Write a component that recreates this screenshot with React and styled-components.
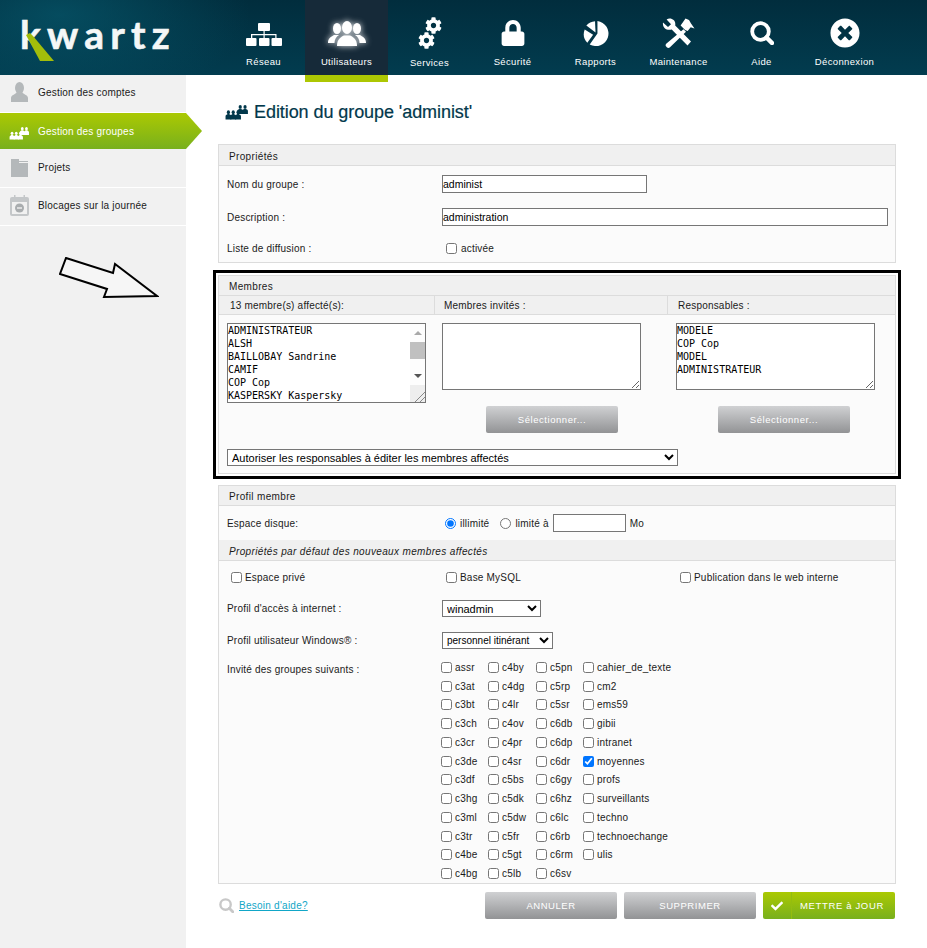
import React from "react";
import styled, { createGlobalStyle } from "styled-components";
import { FaCog, FaLock, FaTimesCircle, FaCheck } from "react-icons/fa";

const GlobalStyle = createGlobalStyle`
  html, body {
    margin: 0;
    padding: 0;
    background: #fff;
    font-family: "Liberation Sans", Arial, sans-serif;
  }
  * { box-sizing: border-box; }
`;

const Page = styled.div`
  width: 927px;
  height: 948px;
  overflow: hidden;
  display: flex;
  flex-direction: column;
`;

const Header = styled.header`
  height: 75px;
  flex: none;
  display: flex;
  background:
    radial-gradient(ellipse 190px 90px at 60px 15px, rgba(6, 85, 105, 0.75), rgba(6, 85, 105, 0) 100%),
    linear-gradient(to bottom, #012d3d, #023c4f);
`;

const LogoBox = styled.div`
  position: relative;
  width: 222px;
  flex: none;
  padding: 11px 0 0 20px;
`;

const LogoText = styled.div`
  color: #f4f7f7;
  font-family: Lato, sans-serif;
  font-weight: 700;
  font-size: 39px;
  line-height: 46px;
  letter-spacing: 6.2px;
  -webkit-text-stroke: 0.6px #f4f7f7;
`;

const LogoLeg = styled.svg`
  position: absolute;
  left: 26px;
  top: 30px;
`;

const Nav = styled.nav`
  display: flex;
  align-items: flex-start;
`;

const NavItem = styled.a`
  position: relative;
  width: 83px;
  height: ${(p) => (p.$active ? "82px" : "75px")};
  display: flex;
  flex-direction: column;
  align-items: center;
  color: #fff;
  font-size: 9.5px;
  letter-spacing: 0.35px;
  background: ${(p) => (p.$active ? "#162a39" : "transparent")};
  border-bottom: ${(p) => (p.$active ? "7px solid #adc703" : "none")};
  white-space: nowrap;
  z-index: 2;
`;

const NavIcon = styled.div`
  height: 56px;
  display: flex;
  align-items: center;
  justify-content: center;
  padding-top: 10px;
  filter: ${(p) => (p.$active ? "drop-shadow(0 0 3px rgba(255,255,255,.9))" : "none")};
`;

const NavLabel = styled.span`
  line-height: 12px;
  margin-top: ${(p) => (p.$low ? "1px" : "0")};
`;

const GearStack = styled.div`
  width: 24px;
  display: flex;
  flex-direction: column;
  svg:first-child { align-self: flex-end; }
  svg:last-child { align-self: flex-start; margin-top: -2px; }
`;

const Body = styled.div`
  flex: 1;
  display: flex;
  min-height: 0;
`;

const Sidebar = styled.aside`
  width: 186px;
  flex: none;
  background: #f1f1f1;
`;

const SideItem = styled.a`
  height: ${(p) => p.$h}px;
  width: ${(p) => (p.$active ? "202px" : "100%")};
  display: flex;
  align-items: center;
  padding-bottom: ${(p) => (p.$active ? "0" : "2px")};
  font-size: 10px;
  letter-spacing: 0.2px;
  color: ${(p) => (p.$active ? "#fff" : "#1a1a1a")};
  background: ${(p) => (p.$active ? "linear-gradient(to bottom, #abc902, #78b01d)" : "transparent")};
  clip-path: ${(p) => (p.$active ? "polygon(0 0, 186px 0, 100% 50%, 186px 100%, 0 100%)" : "none")};
  position: relative;
  z-index: 1;
  margin-bottom: ${(p) => (p.$active ? "1px" : "0")};
  border-bottom: ${(p) => (p.$active ? "none" : "1px solid #fff")};
`;

const SideIcon = styled.span`
  width: 38px;
  flex: none;
  display: flex;
  justify-content: center;
  margin-top: ${(p) => p.$nudge || 0}px;
  color: ${(p) => (p.$active ? "#fff" : "#b4b8ba")};
`;

const ArrowSvg = styled.svg`
  display: block;
  margin: 31px 0 0 59px;
`;

const Main = styled.main`
  flex: 1;
  padding: 0 32px 0 32px;
`;

const Title = styled.h1`
  height: 69px;
  margin: 0;
  padding: 25px 0 0 7px;
  display: flex;
  align-items: flex-start;
  gap: 5px;
  font-size: 18px;
  line-height: 24px;
  letter-spacing: -0.07px;
  font-weight: 400;
  color: #02384b;
  -webkit-text-stroke: 0.2px #02384b;
  svg { margin-top: 5px; }
`;

const Panel = styled.section`
  width: 678px;
  background: #fbfbfb;
  border: 1px solid #dcdcdc;
  font-size: 10px;
  letter-spacing: 0.2px;
  color: #1a1a1a;
  height: ${(p) => p.$h}px;
`;

const PanelHead = styled.div`
  height: ${(p) => p.$h || 21}px;
  padding: 2px 0 0 10px;
  display: flex;
  align-items: center;
  background: #f0f0f0;
  border-bottom: 1px solid #dcdcdc;
  font-size: 10px;
  letter-spacing: 0.35px;
  font-style: ${(p) => (p.$italic ? "italic" : "normal")};
`;

const Row = styled.div`
  height: ${(p) => p.$h}px;
  display: grid;
  grid-template-columns: 215px 1fr;
  padding-left: 8px;
  align-items: center;
`;

const Field = styled.div`
  display: flex;
  align-items: center;
`;

const TextInput = styled.input`
  width: ${(p) => p.$w}px;
  height: 18px;
  margin: ${(p) => p.$margin || 0};
  border: 1px solid #767676;
  border-radius: 0;
  background: #fff;
  padding: 0;
  font-family: "Liberation Sans", Arial, sans-serif;
  font-size: 10.5px;
  color: #000;
  outline: none;
  display: block;
`;

const Check = styled.input.attrs({ type: "checkbox" })`
  width: 11px;
  height: 11px;
  margin: 0 ${(p) => p.$gap || 3}px 0 ${(p) => p.$left || 0}px;
  flex: none;
`;

const Radio = styled.input.attrs({ type: "radio" })`
  width: 11px;
  height: 11px;
  margin: 0 4px 0 ${(p) => p.$left || 0}px;
  flex: none;
`;

const Frame = styled.div`
  width: 688px;
  margin: 7px 0 6px -5px;
  border: 3px solid #000;
  padding: 2px;
`;

const ColHeads = styled.div`
  height: 19px;
  display: grid;
  grid-template-columns: 215px 233px 1fr;
  background: #f0f0f0;
  border-bottom: 1px solid #dcdcdc;
`;

const ColHead = styled.div`
  display: flex;
  align-items: center;
  padding-left: ${(p) => p.$pad}px;
  border-left: ${(p) => (p.$first ? "none" : "1px solid #dcdcdc")};
`;

const MemberCols = styled.div`
  display: grid;
  grid-template-columns: 215px 233px 1fr;
  padding-top: 8px;
  height: 134px;
`;

const MemberCol = styled.div`
  padding-left: ${(p) => p.$pad}px;
`;

const ListWrap = styled.div`
  position: relative;
  width: 199px;
`;

const ListArea = styled.textarea`
  display: block;
  width: 199px;
  height: ${(p) => p.$h}px;
  margin: 0;
  padding: 0;
  border: 1px solid #767676;
  border-radius: 0;
  background: #fff;
  font-family: "DejaVu Sans Mono", "Liberation Mono", monospace;
  font-size: 10px;
  line-height: 13px;
  letter-spacing: 0;
  color: #000;
  outline: none;
  white-space: pre;
`;

// the browser is run with hidden scrollbars, so the list's bar is drawn over it
const ScrollBar = styled.div`
  position: absolute;
  top: 1px;
  right: 1px;
  bottom: 1px;
  width: 15px;
  display: flex;
  flex-direction: column;
  background: #fdfdfd;
`;

const ScrollArrow = styled.div`
  height: 18px;
  flex: none;
  display: flex;
  align-items: center;
  justify-content: center;
  &::before {
    content: "";
    border-left: 4px solid transparent;
    border-right: 4px solid transparent;
    border-${(p) => (p.$up ? "bottom" : "top")}: 4px solid ${(p) => (p.$up ? "#a8a8a8" : "#555")};
  }
`;

const ScrollTrack = styled.div`
  flex: 1;
`;

const ScrollThumb = styled.div`
  height: 17px;
  background: #c0c0c0;
`;

const ScrollCorner = styled.div`
  height: 17px;
  flex: none;
  background:
    linear-gradient(135deg, transparent 66%, #888 66%, #888 69%, transparent 69%, transparent 82%, #888 82%, #888 85%, transparent 85%),
    #eee;
`;

const Button = styled.button`
  display: flex;
  align-items: center;
  justify-content: center;
  width: 132px;
  height: 27px;
  border: none;
  border-radius: 2px;
  padding: 0;
  background: linear-gradient(to bottom, #d0d1d3, #929395);
  color: #fff;
  font-family: "Liberation Sans", Arial, sans-serif;
  font-size: 9.5px;
  letter-spacing: 0.55px;
`;

const SelectButton = styled(Button)`
  margin: 16px 0 0 ${(p) => p.$left}px;
`;

const SaveButton = styled(Button)`
  background: linear-gradient(to bottom, #abc902, #78b01d);
  justify-content: flex-start;
  letter-spacing: 0.65px;
`;

const SaveIcon = styled.span`
  width: 29px;
  align-self: stretch;
  display: flex;
  align-items: center;
  justify-content: center;
  border-right: 1px solid #94bd10;
  margin-right: 8px;
`;

const NativeSelect = styled.select`
  display: block;
  width: ${(p) => p.$w}px;
  height: 17px;
  border: 1px solid #767676;
  border-radius: 0;
  background-color: #fff;
  padding: 0;
  font-family: "Liberation Sans", Arial, sans-serif;
  font-size: ${(p) => p.$size || 11}px;
  color: #000;
  outline: none;
`;

const PolicyRow = styled.div`
  padding-left: 8px;
`;

const OptionsRow = styled.div`
  height: 32px;
  display: grid;
  grid-template-columns: 215px 234px 1fr;
  align-items: center;
  padding-left: 12px;
`;

const InviteRow = styled.div`
  display: grid;
  grid-template-columns: 214px 1fr;
  padding: 2px 0 0 8px;
`;

const InviteLabel = styled.div`
  line-height: 13px;
  padding-top: 5px;
`;

const GroupGrid = styled.div`
  display: grid;
  grid-template-columns: 47px 48px 47px 1fr;
  grid-auto-flow: column;
  grid-template-rows: repeat(12, 18.75px);
`;

const GroupItem = styled.label`
  display: flex;
  align-items: center;
  white-space: nowrap;
`;

const Footer = styled.div`
  width: 677px;
  margin-top: 8px;
  display: flex;
  align-items: center;
  gap: 7px;
`;

const HelpLink = styled.a`
  display: flex;
  align-items: center;
  gap: 5px;
  margin-right: auto;
  padding-left: 1px;
  font-size: 10px;
  letter-spacing: 0.25px;
  color: #11a6c7;
  text-decoration: underline;
  svg { color: #c8c8c8; }
`;

const SitemapIcon = () => (
  <svg width="36" height="27" viewBox="0 -3 36 27" fill="#fff">
    <rect x="12" y="0" width="12" height="8" rx="1" />
    <rect x="0" y="15" width="10.5" height="8" rx="1" />
    <rect x="13" y="15" width="10.5" height="8" rx="1" />
    <rect x="25.5" y="15" width="10.5" height="8" rx="1" />
    <path d="M17.5 8h1.2v3h11.8v4h-1.2v-2.800H18.700V15h-1.200v-2.800H6.300V15H5v-4h12.500z" />
  </svg>
);

const UsersIcon = () => (
  <svg width="38" height="28" viewBox="0 -3 38 28" fill="#fff">
    <ellipse cx="9" cy="6.5" rx="4" ry="5.5" />
    <path d="M0 21c0-5 3-6 6-8h5c-3 2-4.500 4.500-4.500 8z" />
    <ellipse cx="29" cy="6.5" rx="4" ry="5.5" />
    <path d="M38 21c0-5-3-6-6-8h-5c3 2 4.500 4.500 4.500 8z" />
    <ellipse cx="19" cy="5.5" rx="5" ry="6.5" />
    <path d="M9 24c0-7 4-9 7-10.500h6c3 1.500 7 3.500 7 10.500z" />
  </svg>
);

const PieIcon = () => (
  <svg width="28" height="27" viewBox="0 0 29 27" fill="#fff">
    <path d="M16 .6A13 13 0 1 1 8 24.800L16 13.500z" />
    <path d="M4.500 5.200A13 13 0 0 1 13.500.8L14 12.500z" />
    <path d="M2.800 9.300 11.500 14.800 5.500 23A13 13 0 0 1 2.800 9.300z" />
  </svg>
);

const ToolsIcon = () => (
  <svg width="33" height="30" viewBox="0 0 33 30" fill="#fff">
    <path d="M1 4.500 6 9l3-2.800L4.600 1.400C9-1 14.200 2.300 13.200 7.400L29 23.500l-3.500 4L9.700 11.500C4.600 13 .2 9.500 1 4.500z" />
    <path d="M21.500 11.200 24 13.800 8 29.300c-1 .9-2.200.9-3.200 0l-.6-.7c-.8-.9-.8-2 0-2.900z" />
    <path d="M18.600 7.500 23.500.5l3.500 1.500 2 3.500 3.500 5-3.800-1.300-3 3.800-2.600-1z" />
  </svg>
);

const LensIcon = ({ size }) => (
  <svg width={size} height={size} viewBox="0 0 24 24" fill="none" stroke="currentColor">
    <circle cx="10.5" cy="10.5" r="8.3" strokeWidth="3.8" />
    <path d="M16.500 16.500 22 22" strokeWidth="4.5" strokeLinecap="round" />
  </svg>
);

const BustIcon = () => (
  <svg width="17" height="20" viewBox="0 0 17 20" fill="currentColor">
    <ellipse cx="8.5" cy="6" rx="4.5" ry="6" />
    <path d="M0 20v-4c0-3 5-4 6.500-6h4c1.500 2 6.500 3 6.500 6v4z" />
  </svg>
);

// small crowd: two heads behind, three in front
const CrowdIcon = ({ width, height }) => (
  <svg width={width} height={height} viewBox="0 0 22 14" fill="currentColor">
    {[
      [14, 0],
      [18.5, 0],
      [3, 5],
      [7.5, 5],
      [12, 5],
    ].map(([x, y]) => (
      <g key={`${x}-${y}`} transform={`translate(${x} ${y})`}>
        <ellipse cx="0" cy="1.8" rx="1.5" ry="1.8" />
        <path d="M-2.700 8.500V5.500C-2.700 4.300-1 4-.8 3.500H.8C1 4 2.700 4.300 2.700 5.500v3z" />
      </g>
    ))}
  </svg>
);

const FolderIcon = () => (
  <svg width="17" height="18" viewBox="0 0 17 18" fill="currentColor">
    <path d="M0 0h8v2h9v16H0z" />
    <path d="M8 3.500h9" stroke="#f1f1f1" strokeWidth="1" />
  </svg>
);

const CalendarIcon = () => (
  <svg width="19" height="21" viewBox="0 0 19 21" fill="currentColor">
    <rect x="0" y="2" width="19" height="19" rx="2" fill="#c4c7c9" />
    <rect x="2" y="7" width="15" height="12" fill="#f1f1f1" />
    <path d="M4 0h1.500v4H4zM13.500 0H15v4h-1.500z" fill="#c4c7c9" />
    <circle cx="9.5" cy="13" r="4.5" fill="#a9adaf" />
    <path d="M7 12.300h5v1.400H7z" fill="#f1f1f1" />
  </svg>
);

const menu = [
  { label: "Réseau", icon: <SitemapIcon /> },
  { label: "Utilisateurs", icon: <UsersIcon />, active: true },
  {
    label: "Services",
    low: true,
    icon: (
      <GearStack>
        <FaCog size={17} />
        <FaCog size={17} />
      </GearStack>
    ),
  },
  { label: "Sécurité", icon: <FaLock size={26} /> },
  { label: "Rapports", icon: <PieIcon /> },
  { label: "Maintenance", icon: <ToolsIcon /> },
  { label: "Aide", icon: <LensIcon size={24} /> },
  { label: "Déconnexion", icon: <FaTimesCircle size={30} /> },
];

const sideItems = [
  { label: "Gestion des comptes", h: 38, nudge: -2, icon: <BustIcon /> },
  { label: "Gestion des groupes", h: 36, active: true, nudge: 4, icon: <CrowdIcon width={21} height={13} /> },
  { label: "Projets", h: 38, icon: <FolderIcon /> },
  { label: "Blocages sur la journée", h: 38, icon: <CalendarIcon /> },
];

const groups = [
  "assr", "c3at", "c3bt", "c3ch", "c3cr", "c3de", "c3df", "c3hg", "c3ml", "c3tr", "c4be", "c4bg",
  "c4by", "c4dg", "c4lr", "c4ov", "c4pr", "c4sr", "c5bs", "c5dk", "c5dw", "c5fr", "c5gt", "c5lb",
  "c5pn", "c5rp", "c5sr", "c6db", "c6dp", "c6dr", "c6gy", "c6hz", "c6lc", "c6rb", "c6rm", "c6sv",
  "cahier_de_texte", "cm2", "ems59", "gibii", "intranet", "moyennes", "profs", "surveillants",
  "techno", "technoechange", "ulis",
];

const members = [
  "ADMINISTRATEUR", "ALSH", "BAILLOBAY Sandrine", "CAMIF", "COP Cop", "KASPERSKY Kaspersky",
].join("\n");

const managers = ["MODELE", "COP Cop", "MODEL", "ADMINISTRATEUR"].join("\n");

export default function App() {
  return (
    <Page>
      <GlobalStyle />
      <Header>
        <LogoBox>
          <LogoText>kwartz</LogoText>
          <LogoLeg width="30" height="32" viewBox="0 0 30 32">
            <path d="M0 5 4 3 7 6 28 31H14z" fill="#a3bd0a" />
          </LogoLeg>
        </LogoBox>
        <Nav>
          {menu.map((item) => (
            <NavItem key={item.label} $active={item.active}>
              <NavIcon $active={item.active}>{item.icon}</NavIcon>
              <NavLabel $low={item.low}>{item.label}</NavLabel>
            </NavItem>
          ))}
        </Nav>
      </Header>
      <Body>
        <Sidebar>
          {sideItems.map((item) => (
            <SideItem key={item.label} $h={item.h} $active={item.active}>
              <SideIcon $active={item.active} $nudge={item.nudge}>{item.icon}</SideIcon>
              {item.label}
            </SideItem>
          ))}
          <ArrowSvg width="100" height="42" viewBox="0 0 100 42">
            <path
              d="M7 1 54 16 56 7 98 39 45 40 48 32 1 17z"
              fill="#f6f6f6"
              stroke="#000"
              strokeWidth="2"
            />
          </ArrowSvg>
        </Sidebar>
        <Main>
          <Title>
            <CrowdIcon width={24} height={15} />
            Edition du groupe 'administ'
          </Title>

          <Panel $h={119}>
            <PanelHead>Propriétés</PanelHead>
            <Row $h={36}>
              <span>Nom du groupe :</span>
              <TextInput $w={205} defaultValue="administ" />
            </Row>
            <Row $h={30}>
              <span>Description :</span>
              <TextInput $w={446} defaultValue="administration" />
            </Row>
            <Row $h={32}>
              <span>Liste de diffusion :</span>
              <Field>
                <Check $left={4} $gap={4} />
                activée
              </Field>
            </Row>
          </Panel>

          <Frame>
            <Panel $h={199}>
              <PanelHead $h={20}>Membres</PanelHead>
              <ColHeads>
                <ColHead $first $pad={11}>13 membre(s) affecté(s):</ColHead>
                <ColHead $pad={9}>Membres invités :</ColHead>
                <ColHead $pad={10}>Responsables :</ColHead>
              </ColHeads>
              <MemberCols>
                <MemberCol $pad={8}>
                  <ListWrap>
                    <ListArea $h={80} readOnly defaultValue={members} />
                    <ScrollBar>
                      <ScrollArrow $up />
                      <ScrollThumb />
                      <ScrollTrack />
                      <ScrollArrow />
                      <ScrollCorner />
                    </ScrollBar>
                  </ListWrap>
                </MemberCol>
                <MemberCol $pad={8}>
                  <ListArea $h={67} readOnly defaultValue="" />
                  <SelectButton $left={44}>Sélectionner...</SelectButton>
                </MemberCol>
                <MemberCol $pad={9}>
                  <ListArea $h={67} readOnly defaultValue={managers} />
                  <SelectButton $left={42}>Sélectionner...</SelectButton>
                </MemberCol>
              </MemberCols>
              <PolicyRow>
                <NativeSelect $w={451}>
                  <option>Autoriser les responsables à éditer les membres affectés</option>
                </NativeSelect>
              </PolicyRow>
            </Panel>
          </Frame>

          <Panel $h={399}>
            <PanelHead $h={20}>Profil membre</PanelHead>
            <Row $h={34}>
              <span>Espace disque:</span>
              <Field>
                <Radio $left={3} defaultChecked name="quota" />
                illimité
                <Radio $left={11} name="quota" />
                limité à
                <TextInput $w={73} $margin="0 4px 0 4px" />
                Mo
              </Field>
            </Row>
            <PanelHead $italic>Propriétés par défaut des nouveaux membres affectés</PanelHead>
            <OptionsRow>
              <Field>
                <Check />
                Espace privé
              </Field>
              <Field>
                <Check />
                Base MySQL
              </Field>
              <Field>
                <Check />
                Publication dans le web interne
              </Field>
            </OptionsRow>
            <Row $h={31}>
              <span>Profil d'accès à internet :</span>
              <NativeSelect $w={99}>
                <option>winadmin</option>
              </NativeSelect>
            </Row>
            <Row $h={32}>
              <span>Profil utilisateur Windows® :</span>
              <NativeSelect $w={111} $size={10}>
                <option>personnel itinérant</option>
              </NativeSelect>
            </Row>
            <InviteRow>
              <InviteLabel>Invité des groupes suivants :</InviteLabel>
              <GroupGrid>
                {groups.map((name) => (
                  <GroupItem key={name}>
                    <Check defaultChecked={name === "moyennes"} />
                    {name}
                  </GroupItem>
                ))}
              </GroupGrid>
            </InviteRow>
          </Panel>

          <Footer>
            <HelpLink>
              <LensIcon size={15} />
              Besoin d'aide?
            </HelpLink>
            <Button>ANNULER</Button>
            <Button>SUPPRIMER</Button>
            <SaveButton>
              <SaveIcon>
                <FaCheck size={12} />
              </SaveIcon>
              METTRE à JOUR
            </SaveButton>
          </Footer>
        </Main>
      </Body>
    </Page>
  );
}
